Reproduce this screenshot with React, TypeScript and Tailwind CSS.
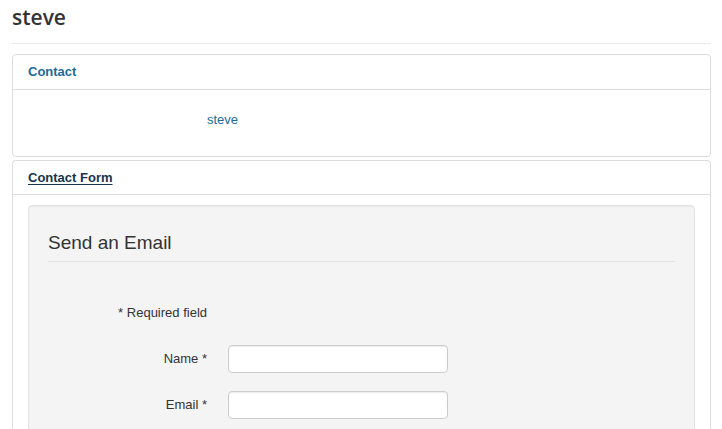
const sans = "font-['Liberation_Sans',Arial,sans-serif]"

const Field = ({ label }: { label: string }) => (
  <div className="flex items-center">
    <label className="w-[159px] text-right text-[13px] text-[#333]">{label}</label>
    <input
      type="text"
      className="ml-[21px] h-[28px] w-[220px] rounded-[4px] border border-[#ccc] bg-white shadow-[inset_0_1px_1px_rgba(0,0,0,0.075)] outline-none"
    />
  </div>
)

const App = () => {
  return (
    <div className={`min-h-[429px] bg-white pl-[12px] pr-[11px] ${sans}`}>
      {/* Page title */}
      <div className="h-[44px] border-b border-[#e8e8e8]">
        <h1 className="font-['Open_Sans',sans-serif] text-[21px] leading-[34px] font-semibold text-[#333]">
          steve
        </h1>
      </div>

      {/* Contact panel */}
      <div className="mt-[10px] rounded-[4px] border border-[#ddd] bg-white">
        <div className="flex h-[35px] items-center border-b border-[#ddd] px-[15px]">
          <span className="text-[13px] font-bold text-[#1b6a98]">Contact</span>
        </div>
        <div className="grid h-[66px] grid-cols-[179px_1fr] items-start px-[15px] pt-[21px]">
          <div />
          <a className="text-[13px] leading-[18px] text-[#1b6a98]">steve</a>
        </div>
      </div>

      {/* Contact form panel */}
      <div className="mt-[3px] rounded-t-[4px] border border-b-0 border-[#ddd] bg-white">
        <div className="flex h-[34px] items-center border-b border-[#ddd] px-[15px]">
          <span className="text-[13px] font-bold text-[#15344d] underline underline-offset-2">Contact Form</span>
        </div>
        <div className="px-[15px] pt-[10px]">
          <div className="h-[240px] rounded-[4px] border border-[#e3e3e3] bg-[#f4f4f4] p-[19px] shadow-[inset_0_1px_1px_rgba(0,0,0,0.05)]">
            <div className="h-[37px] border-b border-[#e2e2e2] text-[19px] leading-[36px] text-[#333]">
              Send an Email
            </div>
            <div className="mt-[42px] flex">
              <p className="w-[159px] text-right text-[13px] leading-[18px] text-[#333]">* Required field</p>
            </div>
            <div className="mt-[23px] flex flex-col gap-[18px]">
              <Field label="Name *" />
              <Field label="Email *" />
            </div>
          </div>
        </div>
      </div>
    </div>
  )
}

export default App
